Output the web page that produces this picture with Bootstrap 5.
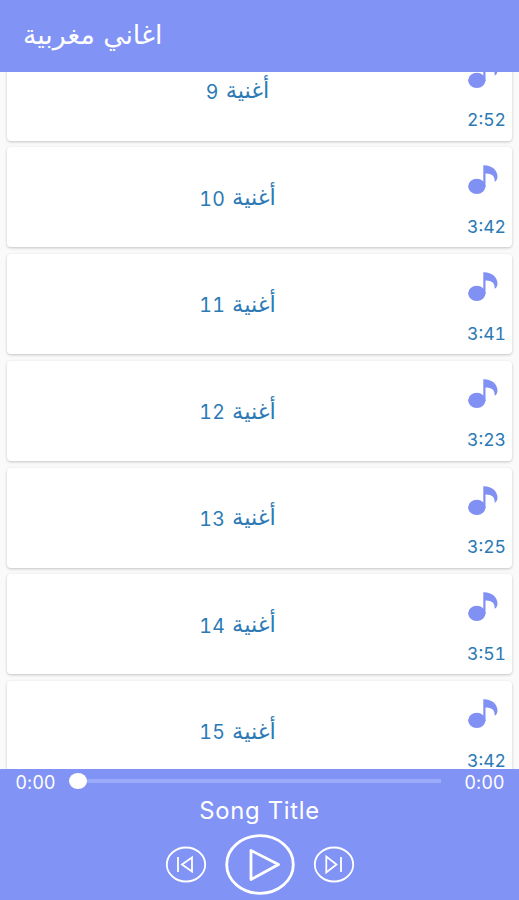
<!DOCTYPE html>
<html lang="ar">
<head>
<meta charset="utf-8">
<meta name="viewport" content="width=device-width, initial-scale=1">
<title>اغاني مغربية</title>
<link href="https://cdn.jsdelivr.net/npm/bootstrap@5.3.0/dist/css/bootstrap.min.css" rel="stylesheet">
<style>
body{font-family:Inter,"DejaVu Sans",sans-serif;background:#fafafa}
.app-bar{height:72px;background:#8193f5;padding:0 0 2px 23px}
.app-title{font-size:26.7px;line-height:1;font-family:"DejaVu Sans",sans-serif}
.song-list{min-height:0;gap:6.75px}
.song{flex:none;height:100px;margin:0 7px;border-radius:4px;background:#fff;box-shadow:0 1px 3px rgba(0,0,0,.22);padding-right:6px;color:#2c7ab5}
.song:first-child{margin-top:-31.5px}
.song-name{flex:1;gap:7px;padding-left:6px;line-height:1}
.song-word{font:22.5px/1 "DejaVu Sans",sans-serif}
.song-num{font-size:19.5px;padding-top:4px;font-variant-numeric:tabular-nums;letter-spacing:.3px}
.song-side{width:44px;padding-top:17px}
.note{width:30px;height:32px;fill:#8090f3;margin-right:8px}
.time{font-size:17.6px;line-height:20px;margin-top:20.5px;font-variant-numeric:tabular-nums}
.player{height:131px;background:#8193f5}
.seek{height:24px;padding:0 14px 0 15px}
.seek-time{font-size:18px;line-height:24px;width:41px;padding-top:3px;letter-spacing:.2px}
.track{height:4px;background:#9aabfa;margin:0 23px 0 22px}
.thumb{width:18px;height:16px;border-radius:50%;margin-left:-9px}
.song-title{font-size:23.8px;line-height:30px;letter-spacing:.7px;margin-top:3px}
.controls{gap:18px;margin-top:8px}
.controls svg{fill:none;stroke:#fff}
</style>
<script src="https://cdn.jsdelivr.net/npm/bootstrap@5.3.0/dist/js/bootstrap.bundle.min.js"></script>
</head>
<body class="vh-100 overflow-hidden d-flex flex-column">
<svg class="d-none"><symbol id="note" viewBox="0 0 30 32"><ellipse cx="8.8" cy="22.3" rx="8.7" ry="7.6"/><path d="M15.3 1.2C23.5 .8 29.5 6 29.5 12.5C29.5 15 28.5 16.8 26.6 17.8C27.3 12 23.5 9.2 17.5 9.4V23H15.3Z"/></symbol></svg>
<header class="app-bar d-flex align-items-center text-white flex-shrink-0"><h1 class="app-title m-0" dir="rtl">اغاني مغربية</h1></header>
<main class="song-list flex-fill overflow-hidden d-flex flex-column">
<div class="song d-flex"><div class="song-name d-flex justify-content-center align-items-center"><span class="song-num">9</span><span class="song-word">أغنية</span></div><div class="song-side d-flex flex-column align-items-end"><svg class="note"><use href="#note"/></svg><span class="time">2:52</span></div></div>
<div class="song d-flex"><div class="song-name d-flex justify-content-center align-items-center"><span class="song-num">10</span><span class="song-word">أغنية</span></div><div class="song-side d-flex flex-column align-items-end"><svg class="note"><use href="#note"/></svg><span class="time">3:42</span></div></div>
<div class="song d-flex"><div class="song-name d-flex justify-content-center align-items-center"><span class="song-num">11</span><span class="song-word">أغنية</span></div><div class="song-side d-flex flex-column align-items-end"><svg class="note"><use href="#note"/></svg><span class="time">3:41</span></div></div>
<div class="song d-flex"><div class="song-name d-flex justify-content-center align-items-center"><span class="song-num">12</span><span class="song-word">أغنية</span></div><div class="song-side d-flex flex-column align-items-end"><svg class="note"><use href="#note"/></svg><span class="time">3:23</span></div></div>
<div class="song d-flex"><div class="song-name d-flex justify-content-center align-items-center"><span class="song-num">13</span><span class="song-word">أغنية</span></div><div class="song-side d-flex flex-column align-items-end"><svg class="note"><use href="#note"/></svg><span class="time">3:25</span></div></div>
<div class="song d-flex"><div class="song-name d-flex justify-content-center align-items-center"><span class="song-num">14</span><span class="song-word">أغنية</span></div><div class="song-side d-flex flex-column align-items-end"><svg class="note"><use href="#note"/></svg><span class="time">3:51</span></div></div>
<div class="song d-flex"><div class="song-name d-flex justify-content-center align-items-center"><span class="song-num">15</span><span class="song-word">أغنية</span></div><div class="song-side d-flex flex-column align-items-end"><svg class="note"><use href="#note"/></svg><span class="time">3:42</span></div></div>
</main>
<footer class="player flex-shrink-0 text-white text-center">
<div class="seek d-flex align-items-center"><span class="seek-time">0:00</span><div class="track flex-fill d-flex align-items-center"><div class="thumb bg-white flex-shrink-0"></div></div><span class="seek-time">0:00</span></div>
<div class="song-title">Song Title</div>
<div class="controls d-flex justify-content-center align-items-center">
<svg width="42" height="37" viewBox="0 0 42 37" stroke-width="1.8"><ellipse cx="21" cy="18.5" rx="19.2" ry="17"/><path d="M13 11V26M27 11.5V25.5L17 18.5Z"/></svg>
<svg width="70" height="61" viewBox="0 0 70 61" stroke-width="2.8"><ellipse cx="35" cy="30.5" rx="33.3" ry="28.8"/><path stroke-linejoin="round" d="M26 16.5V45.5L53.5 30.5Z"/></svg>
<svg width="42" height="37" viewBox="0 0 42 37" stroke-width="1.8"><ellipse cx="21" cy="18.5" rx="19.2" ry="17"/><path d="M28 11V26M13.3 10.5V26.5L23.5 18.5Z"/></svg>
</div>
</footer>
</body>
</html>
